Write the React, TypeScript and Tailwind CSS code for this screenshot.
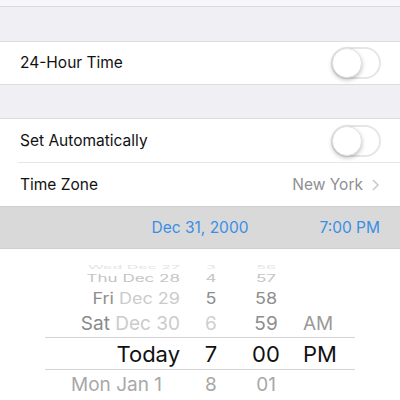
import React from "react";

const font = { fontFamily: 'Inter, "Noto Sans", sans-serif' };

function Toggle() {
  return (
    <div className="relative h-[32px] w-[50px] rounded-full border-2 border-[#e6e6e6] bg-white">
      <div className="absolute -left-[1px] -top-[1px] h-[30px] w-[30px] rounded-full bg-white shadow-[0_2px_4px_rgba(0,0,0,0.25)] border border-[#e2e2e2]" />
    </div>
  );
}

type Cell = { t: string; c: string };
type Row = { h: string; size: string; squish?: string; cells: Cell[]; sel?: boolean };

const rows: Row[] = [
  {
    h: "h-[10px]",
    size: "text-[16px]",
    squish: "scale-y-[0.3]",
    cells: [
      { t: "Wed Dec 27", c: "text-[#e4e4e4]" },
      { t: "3", c: "text-[#e4e4e4]" },
      { t: "56", c: "text-[#e4e4e4]" },
      { t: "", c: "" },
    ],
  },
  {
    h: "h-[18px]",
    size: "text-[17px]",
    squish: "scale-y-[0.6]",
    cells: [
      { t: "Thu Dec 28", c: "text-[#c4c4c4]" },
      { t: "4", c: "text-[#c4c4c4]" },
      { t: "57", c: "text-[#c4c4c4]" },
      { t: "", c: "" },
    ],
  },
  {
    h: "h-[23px]",
    size: "text-[18px]",
    squish: "scale-y-[0.85]",
    cells: [
      { t: "Fri|Dec 29", c: "text-[#8e8e8e]" },
      { t: "5", c: "text-[#8e8e8e]" },
      { t: "58", c: "text-[#8e8e8e]" },
      { t: "", c: "" },
    ],
  },
  {
    h: "h-[27px]",
    size: "text-[19px]",
    cells: [
      { t: "Sat|Dec 30", c: "text-[#8a8a8a]" },
      { t: "6", c: "text-[#cfcfcf]" },
      { t: "59", c: "text-[#8e8e8e]" },
      { t: "AM", c: "text-[#9a9a9a]" },
    ],
  },
  {
    h: "h-[33px]",
    size: "text-[22px]",
    sel: true,
    cells: [
      { t: "Today", c: "text-[#111]" },
      { t: "7", c: "text-[#111]" },
      { t: "00", c: "text-[#111]" },
      { t: "PM", c: "text-[#111]" },
    ],
  },
  {
    h: "h-[28px]",
    size: "text-[19px]",
    cells: [
      { t: "Mon Jan 1", c: "text-[#a8a8a8]" },
      { t: "8", c: "text-[#a8a8a8]" },
      { t: "01", c: "text-[#a8a8a8]" },
      { t: "", c: "" },
    ],
  },
];

function DateCell({ cell }: { cell: Cell }) {
  if (cell.t.includes("|")) {
    const [day, rest] = cell.t.split("|");
    return (
      <span>
        <span className={cell.c}>{day}</span>{" "}
        <span className="text-[#cbcbcb]">{rest}</span>
      </span>
    );
  }
  return <span className={cell.c}>{cell.t}</span>;
}

function Picker() {
  return (
    <div className="flex flex-col bg-white pt-[10px] h-[152px] overflow-hidden">
      {rows.map((r, i) => (
        <div
          key={i}
          className={`mx-[45px] grid grid-cols-[138px_56px_54px_1fr] items-center ${r.h} ${r.size} ${
            r.sel ? "border-y border-[#d4d4d4]" : ""
          }`}
        >
          <div className={`flex justify-end leading-none whitespace-nowrap ${r.squish ?? ""} ${i === 5 ? "pr-[21px]" : "pr-[3px]"}`}>
            <DateCell cell={r.cells[0]} />
          </div>
          <div className={`text-center leading-none ${r.squish ?? ""} ${r.cells[1].c}`}>{r.cells[1].t}</div>
          <div className={`text-center leading-none ${r.squish ?? ""} ${r.cells[2].c}`}>{r.cells[2].t}</div>
          <div className={`pl-[10px] leading-none ${r.squish ?? ""} ${r.cells[3].c}`}>{r.cells[3].t}</div>
        </div>
      ))}
    </div>
  );
}

export default function App() {
  return (
    <div className="w-[400px] h-[400px] overflow-hidden bg-[#efeff4]" style={font}>
      {/* top cell remnant */}
      <div className="h-[7px] bg-[#f7f7f9] border-b border-[#dcdce0]" />
      <div className="h-[34px]" />

      {/* 24-hour */}
      <div className="bg-white border-y border-[#dcdce0] h-[44px] flex items-center justify-between pl-[20px] pr-[19px]">
        <span className="text-[15.5px] text-[#111]">24-Hour Time</span>
        <Toggle />
      </div>

      <div className="h-[33px]" />

      <div className="bg-white border-t border-[#dcdce0]">
        <div className="h-[43px] flex items-center justify-between pl-[20px] pr-[19px]">
          <span className="text-[15.5px] text-[#111]">Set Automatically</span>
          <Toggle />
        </div>
        <div className="ml-[18px] h-px bg-[#e6e6ea]" />
        <div className="h-[43px] flex items-center justify-between pl-[20px] pr-[21px]">
          <span className="text-[15.5px] text-[#111]">Time Zone</span>
          <span className="flex items-center gap-[9px] text-[15.5px] text-[#8e8e93]">
            New York
            <svg width="7" height="12" viewBox="0 0 7 12" fill="none">
              <path d="M1 1l5 5-5 5" stroke="#c7c7cc" strokeWidth="1.5" />
            </svg>
          </span>
        </div>
      </div>

      {/* selected date band */}
      <div className="h-[43px] bg-[#d9d9d9] border-y border-[#cfcfcf] flex items-center justify-end gap-[71px] pr-[20px] text-[15.5px] text-[#3a8ee6]">
        <span>Dec 31, 2000</span>
        <span>7:00 PM</span>
      </div>

      <Picker />
    </div>
  );
}
